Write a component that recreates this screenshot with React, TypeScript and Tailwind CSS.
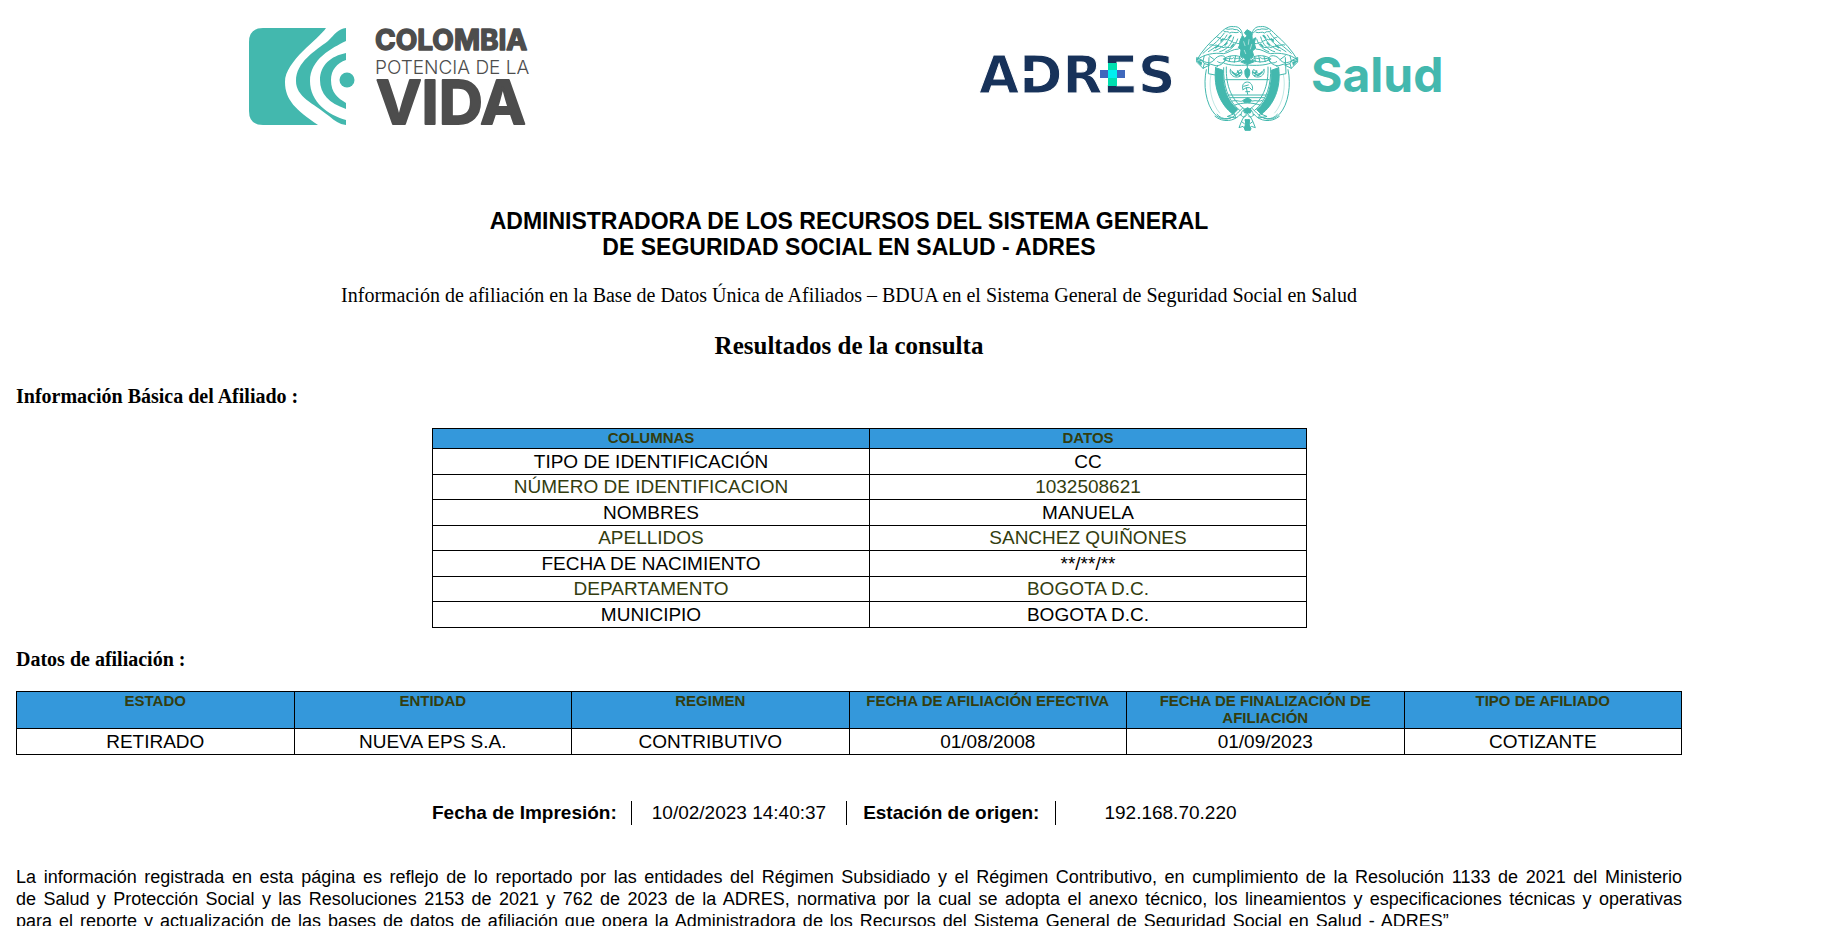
import React from "react";

const basicInfo: [string, string][] = [
  ["TIPO DE IDENTIFICACIÓN", "CC"],
  ["NÚMERO DE IDENTIFICACION", "1032508621"],
  ["NOMBRES", "MANUELA"],
  ["APELLIDOS", "SANCHEZ QUIÑONES"],
  ["FECHA DE NACIMIENTO", "**/**/**"],
  ["DEPARTAMENTO", "BOGOTA D.C."],
  ["MUNICIPIO", "BOGOTA D.C."],
];

const membership: [string, string][] = [
  ["ESTADO", "RETIRADO"],
  ["ENTIDAD", "NUEVA EPS S.A."],
  ["REGIMEN", "CONTRIBUTIVO"],
  ["FECHA DE AFILIACIÓN EFECTIVA", "01/08/2008"],
  ["FECHA DE FINALIZACIÓN DE AFILIACIÓN", "01/09/2023"],
  ["TIPO DE AFILIADO", "COTIZANTE"],
];

const HEAD = "border border-black bg-[#3498db] px-2 align-top text-[15px] leading-[17px] font-bold text-[#333d0f]";

function ColombiaLogo() {
  return (
    <svg viewBox="0 -10 284 124" className="h-[124px] w-[284px] shrink-0" role="img" aria-label="Colombia potencia de la vida">
      <g fill="#43b8ae">
        <path d="M14 3H77C70 14 36 36 36 57C36 75 47 85 69 100H14Q0 100 0 86V17Q0 3 14 3Z" />
        <path d="M97 3V16C83 23 61 34 61 56C61 77 79 90 97 95V100C90 99 86 96 80 91C64 78 47 72 47 56C47 37 66 26 79 16C86 9 89 4 97 3Z" />
        <path d="M97 28V35C88 38 82 45 82 55C82 68 89 73 97 78V84C80 78 71 69 71 55C71 40 82 31 97 28Z" />
        <circle cx="98" cy="55" r="7.500" />
      </g>
      <g fill="#4d4d4d" fontFamily="Inter, sans-serif">
        <text x="126" y="25" fontSize="28" fontWeight="700" stroke="#4d4d4d" strokeWidth="1.500" strokeLinejoin="round">COLOMBIA</text>
        <text x="126" y="49" fontSize="19" fontWeight="300">POTENCIA DE LA</text>
        <text x="127" y="99" fontSize="61" fontWeight="700" stroke="#4d4d4d" strokeWidth="2" strokeLinejoin="round">VIDA</text>
      </g>
    </svg>
  );
}

function AdresLogo() {
  return (
    <svg viewBox="0 -10 200 80" className="h-20 w-[200px] shrink-0" role="img" aria-label="ADRES">
      <text x="0" y="46" fontSize="52" fontWeight="700" fontFamily="'DejaVu Sans', sans-serif" fill="#17325a" stroke="#ffffff" strokeWidth="1">ADRES</text>
      <path d="M43 24H58V31H43ZM126 16H160V38H126Z" fill="#ffffff" />
      <path d="M129 16H138V39H129Z" fill="#00dfb0" />
      <path d="M121 23H146V31H121Z" fill="#4068bc" />
      <path d="M129 23H138V31H129Z" fill="#00f0f0" />
    </svg>
  );
}

// One half of the emblem; the other half mirrors it.
function CrestHalf() {
  return (
    <g>
      {/* wing and feathers */}
      <path d="M12 116C28 88 52 62 78 40C92 24 108 14 122 17C138 15 148 28 148 42M12 116C34 100 62 94 92 98C106 96 118 84 136 84" />
      <path d="M30 97C50 78 74 64 94 36M46 92C64 80 88 68 102 42M62 90C82 84 104 68 112 44M80 92C98 88 116 72 122 48M98 92C114 86 128 74 134 54" />
      <path d="M72 48C76 52 82 48 84 56C92 52 96 60 104 54C110 62 118 58 122 66C128 62 132 70 138 68M50 72C58 68 62 76 70 72C76 80 84 72 90 80C98 74 106 84 116 78M92 30C98 36 104 28 110 36C118 30 126 38 136 34M100 24C108 28 116 20 126 26C132 24 138 28 144 36" />
      <path d="M84 60L90 54M96 72L102 66M108 50L114 44M68 80L76 74M116 76L122 70" strokeWidth="5" />
      {/* ribbon, pole tips */}
      <path d="M12 116L30 120C44 128 56 126 64 116C74 102 94 100 98 112C98 126 84 130 74 122M30 120L34 104M64 116L48 104M98 112C96 124 84 134 72 134" />
      <path d="M12 110L28 118L34 128L50 132L30 142L12 124ZM34 128L30 142" />
      <path d="M14 120L26 124L24 132Z" fill="#43b8ae" />
      {/* flags */}
      <path d="M48 110L46 158L66 162M48 128L74 136M40 146C30 190 38 250 66 280C78 292 92 298 112 292" />
      <path d="M54 160C46 196 54 246 80 276" strokeWidth="1" />
      <path d="M68 140L90 148C88 192 100 240 134 266L120 280C84 252 60 204 68 140Z" fill="#43b8ae" />
      <path d="M92 140C90 190 104 240 140 268M72 280C88 300 116 296 134 276L148 262M66 286C90 306 124 302 142 280M104 286L124 278L128 290Z" />
      {/* shield edge */}
      <path d="M92 126C108 134 140 134 164 132M100 138C98 192 114 242 164 270" />
      {/* laurel */}
      <path d="M92 114C104 102 136 100 150 112C140 126 108 126 92 114ZM100 114C110 108 114 118 122 110C130 118 136 106 144 114M108 122L112 106M124 124L128 104M138 122L140 106" />
      {/* horn of plenty */}
      <path d="M112 146C108 158 120 170 134 168C146 166 150 156 144 146C136 146 136 156 128 158C120 158 118 150 112 146Z" />
      <path d="M118 154L130 164L144 154M134 150L140 164" strokeWidth="5" />
      {/* lower ribbon */}
      <path d="M164 276C150 286 146 300 138 320L150 316L156 324L158 296M146 302L154 308M164 262C152 262 144 272 144 282M142 280C148 290 154 290 160 284" />
    </g>
  );
}

function CoatOfArms() {
  return (
    <svg viewBox="0 0 324 336" className="ml-3.5 h-28 w-[108px] shrink-0" role="img" aria-label="Escudo de Colombia">
      <g fill="none" stroke="#43b8ae" strokeWidth="3" strokeLinecap="round" strokeLinejoin="round">
        <CrestHalf />
        <g transform="translate(325 0) scale(-1 1)">
          <CrestHalf />
        </g>
        {/* condor */}
        <path d="M148 44C144 54 138 60 140 72L136 80L144 86L142 104L154 112L164 124L172 112L182 104L178 90L188 82L184 66L188 50L178 56L176 34L162 26L154 36L162 44L156 52Z" fill="#43b8ae" />
        <path d="M152 62L156 74M168 56L166 70M176 70L172 84M154 88L158 98" stroke="#d9f1ef" strokeWidth="2" />
        <path d="M144 122C154 114 176 114 184 122L164 130Z" fill="#43b8ae" />
        {/* shield bands */}
        <path d="M98 176H228M106 222H220M112 230H214" />
        {/* pomegranate */}
        <path d="M163 134V142M156 150C156 140 170 140 170 150C172 162 166 170 163 172C158 168 154 160 156 150Z" fill="#43b8ae" />
        {/* cap on its lance */}
        <path d="M150 206C144 190 156 180 168 184C178 188 180 200 178 208L170 200H160L164 220M150 206L160 200M152 196L166 192M158 212H170" />
        {/* isthmus and ships */}
        <path d="M118 240C134 236 140 244 148 240M178 240C190 236 200 244 208 238M126 252C146 244 180 244 200 252" />
        <path d="M150 238L164 230L176 238L172 244H154Z" fill="#43b8ae" />
        <path d="M152 268L164 260L176 268L172 276H156Z" fill="#43b8ae" />
        <path d="M157 296H170L168 312L174 322L172 328H156L154 320L159 310Z" fill="#43b8ae" />
      </g>
    </svg>
  );
}

export default function App() {
  return (
    <div className="min-h-screen bg-white pr-[166px] pl-4 font-['Liberation_Serif',serif] text-black">
      <header className="flex pt-[15px] pl-[233px]">
        <ColombiaLogo />
        <div className="ml-[446px] flex items-center">
          <AdresLogo />
          <CoatOfArms />
          <span className="ml-2.5 pb-1 font-['Inter',sans-serif] text-[48px] leading-none font-bold text-[#43b8ae]">Salud</span>
        </div>
      </header>

      <main>
        <h1 className="mt-[69px] text-center font-['Liberation_Sans',sans-serif] text-[23px] leading-[26px] font-bold">
          ADMINISTRADORA DE LOS RECURSOS DEL SISTEMA GENERAL
          <br />
          DE SEGURIDAD SOCIAL EN SALUD - ADRES
        </h1>
        <p className="mt-6 text-center text-[20px] leading-[23px]">
          Información de afiliación en la Base de Datos Única de Afiliados – BDUA en el Sistema General de Seguridad Social en Salud
        </p>
        <h2 className="mt-6 text-center text-[25px] leading-[29px] font-bold">Resultados de la consulta</h2>

        <h3 className="mt-[25px] text-[20px] leading-[23px] font-bold">Información Básica del Afiliado :</h3>
        <table className="mt-5 ml-[416px] w-[875px] table-fixed border-collapse text-center font-['Liberation_Sans',sans-serif] text-[19px] leading-[22px]">
          <thead>
            <tr>
              <th className={`${HEAD} h-5`}>COLUMNAS</th>
              <th className={`${HEAD} h-5`}>DATOS</th>
            </tr>
          </thead>
          <tbody>
            {basicInfo.map(([label, value]) => (
              <tr key={label} className="odd:h-[26px] even:h-[25px] even:text-[#333d0f]">
                <td className="border border-black">{label}</td>
                <td className="border border-black">{value}</td>
              </tr>
            ))}
          </tbody>
        </table>

        <h3 className="mt-5 text-[20px] leading-[23px] font-bold">Datos de afiliación :</h3>
        <table className="mt-5 w-full table-fixed border-collapse text-center font-['Liberation_Sans',sans-serif] text-[19px] leading-[22px]">
          <thead>
            <tr className="h-[37px]">
              {membership.map(([label]) => (
                <th key={label} className={HEAD}>{label}</th>
              ))}
            </tr>
          </thead>
          <tbody>
            <tr className="h-[26px]">
              {membership.map(([label, value]) => (
                <td key={label} className="border border-black">{value}</td>
              ))}
            </tr>
          </tbody>
        </table>

        <dl className="mt-[46px] ml-[416px] flex font-['Liberation_Sans',sans-serif] text-[19px] leading-[24px]">
          <dt className="border-r border-black pr-3.5 font-bold">Fecha de Impresión:</dt>
          <dd className="border-r border-black px-5">10/02/2023 14:40:37</dd>
          <dt className="border-r border-black px-4 font-bold">Estación de origen:</dt>
          <dd className="pl-12">192.168.70.220</dd>
        </dl>

        <p className="mt-[41px] text-justify font-['Liberation_Sans',sans-serif] text-[18px] leading-[22px] [text-align-last:justify]">
          La información registrada en esta página es reflejo de lo reportado por las entidades del Régimen Subsidiado y el Régimen Contributivo, en cumplimiento de la Resolución 1133 de 2021 del Ministerio
          <br />
          de Salud y Protección Social y las Resoluciones 2153 de 2021 y 762 de 2023 de la ADRES, normativa por la cual se adopta el anexo técnico, los lineamientos y especificaciones técnicas y operativas
          <br />
          <span className="block w-[86%]">
            para el reporte y actualización de las bases de datos de afiliación que opera la Administradora de los Recursos del Sistema General de Seguridad Social en Salud - ADRES”
          </span>
        </p>
      </main>
    </div>
  );
}
